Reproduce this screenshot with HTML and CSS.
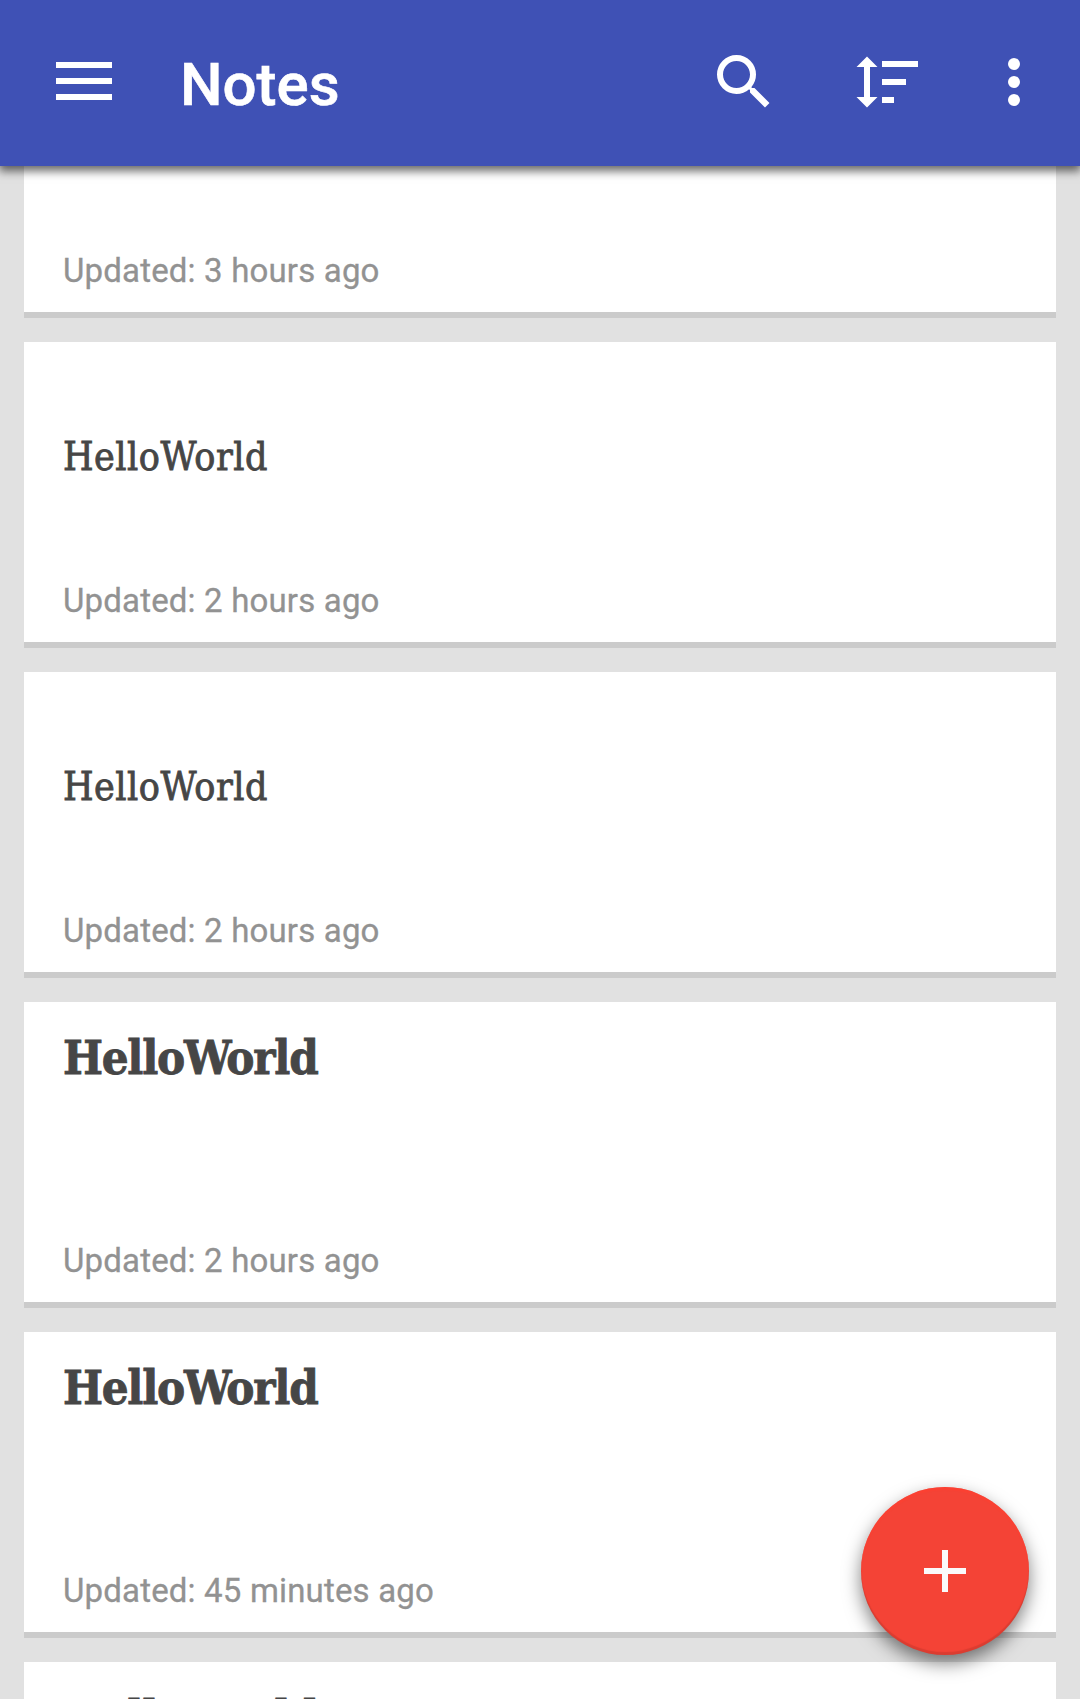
FILE: index.html
```html
<!DOCTYPE html>
<html lang="en">
<head>
<meta charset="utf-8">
<title>Notes</title>
<link rel="stylesheet" href="styles.css">
</head>
<body>
<div class="app">
  <header class="toolbar">
    <button class="icon-button" aria-label="Menu">
      <svg class="icon" viewBox="0 0 72 72"><path d="M8 16h56v6H8zM8 32h56v6H8zM8 48h56v6H8z"/></svg>
    </button>
    <h1 class="toolbar-title">Notes</h1>
    <button class="icon-button" aria-label="Search">
      <svg class="icon" viewBox="0 0 24 24"><path d="M15.5 14h-.79l-.28-.27A6.471 6.471 0 0 0 16 9.5 6.5 6.5 0 1 0 9.5 16c1.61 0 3.09-.59 4.23-1.57l.27.28v.79l5 4.99L20.49 19l-4.99-5zm-6 0C7.01 14 5 11.99 5 9.5S7.01 5 9.5 5 14 7.01 14 9.5 11.99 14 9.5 14z"/></svg>
    </button>
    <button class="icon-button sort" aria-label="Sort">
      <svg class="icon" viewBox="0 0 72 72"><path d="M15 10.5L25.5 21H18v30h7.500L15 61.500 4.500 51H12V21H4.500zM30 15h36v6H30zM30 33h24v6H30zM30 51h12v6H30z"/></svg>
    </button>
    <button class="icon-button more" aria-label="More options">
      <svg class="icon" viewBox="0 0 72 72"><circle cx="36" cy="18" r="6"/><circle cx="36" cy="36" r="6"/><circle cx="36" cy="54" r="6"/></svg>
    </button>
  </header>
  <main class="notes">
    <article class="note note-cut">
      <p class="note-date">Updated: 3 hours ago</p>
    </article>
    <article class="note">
      <p class="note-text">HelloWorld</p>
      <p class="note-date">Updated: 2 hours ago</p>
    </article>
    <article class="note">
      <p class="note-text">HelloWorld</p>
      <p class="note-date">Updated: 2 hours ago</p>
    </article>
    <article class="note">
      <h2 class="note-title">HelloWorld</h2>
      <p class="note-date">Updated: 2 hours ago</p>
    </article>
    <article class="note">
      <h2 class="note-title">HelloWorld</h2>
      <p class="note-date">Updated: 45 minutes ago</p>
    </article>
    <article class="note">
      <h2 class="note-title">HelloWorld</h2>
    </article>
  </main>
  <button class="fab" aria-label="Add note">
    <svg class="fab-icon" viewBox="0 0 42 42"><path d="M18 0h6v18h18v6H24v18h-6V24H0v-6h18z"/></svg>
  </button>
</div>
</body>
</html>
```
FILE: styles.css
```css
* {
  box-sizing: border-box;
}

body {
  margin: 0;
  background: #e1e1e1;
  font-family: Roboto, sans-serif;
}

h1, h2, p {
  margin: 0;
}

button {
  border: 0;
  padding: 0;
  background: none;
}

.app {
  position: relative;
  display: flex;
  flex-direction: column;
  height: 1699px;
  overflow: hidden;
}

.toolbar {
  position: relative;
  z-index: 1;
  display: flex;
  flex: none;
  align-items: center;
  height: 166px;
  padding: 0 30px 2px 48px;
  background: #3f51b5;
  box-shadow: 0 4px 9px 1px rgba(0, 0, 0, 0.6);
}

.icon-button {
  width: 72px;
  height: 72px;
}

.icon {
  display: block;
  width: 72px;
  height: 72px;
  fill: #fff;
}

.toolbar-title {
  flex: 1;
  margin-left: 60px;
  padding-top: 5px;
  font-size: 60px;
  font-weight: 500;
  line-height: 72px;
  color: #fff;
  -webkit-text-stroke: 0.6px #fff;
}

.sort {
  margin-left: 72px;
}

.more {
  margin-left: 54px;
}

.notes {
  display: flex;
  flex-direction: column;
  gap: 24px;
  padding: 0 24px;
}

.note {
  display: flex;
  flex: none;
  flex-direction: column;
  height: 306px;
  padding: 28px 39px 21px;
  border-bottom: 6px solid #cbcbcb;
  background: #fff;
}

.note-cut {
  height: 152px;
}

.note-title,
.note-text {
  font-family: "Roboto Slab", "DejaVu Serif Condensed", "DejaVu Serif", serif;
  color: #464646;
  -webkit-text-stroke: 0.8px #464646;
}

.note-title {
  font-size: 47px;
  font-weight: 700;
  line-height: 55px;
  letter-spacing: -1.25px;
}

.note-text {
  padding-top: 64px;
  font-size: 39px;
  line-height: 46px;
  letter-spacing: 0.5px;
}

.note-date {
  margin-top: auto;
  font-size: 33px;
  line-height: 40px;
  letter-spacing: 0.17px;
  color: #929292;
  -webkit-text-stroke: 0.3px #929292;
}

.fab {
  position: absolute;
  z-index: 2;
  right: 51px;
  bottom: 44px;
  display: flex;
  align-items: center;
  justify-content: center;
  width: 168px;
  height: 168px;
  border-radius: 50%;
  background: #f44336;
  box-shadow:
    inset 0 -3px 1px rgba(0, 0, 0, 0.1),
    inset 0 3px 1px rgba(255, 64, 48, 0.6),
    0 8px 18px rgba(0, 0, 0, 0.5);
}

.fab-icon {
  width: 42px;
  height: 42px;
  fill: #fafafa;
}
```
